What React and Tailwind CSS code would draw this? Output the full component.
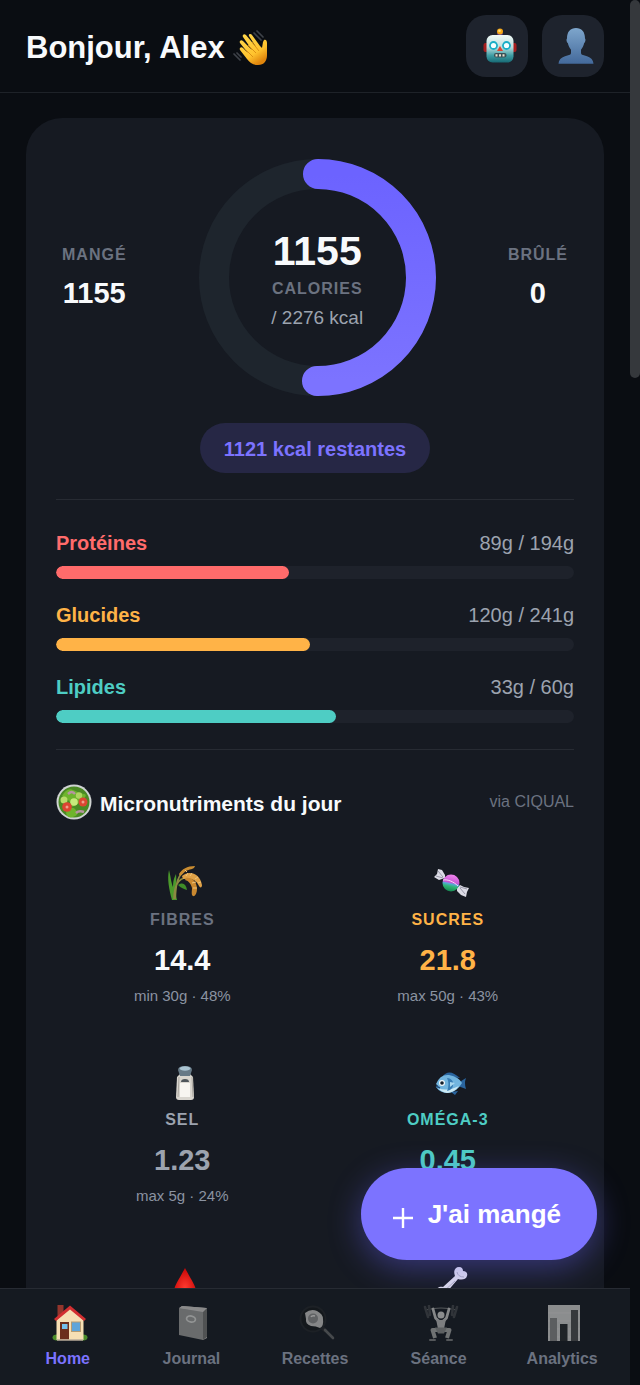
import React from "react";

function Wave() {
  return (
    <svg viewBox="0 0 36 36" className="size-9" aria-hidden="true">
      <defs>
        <linearGradient id="hand" x1="0" y1="0" x2="0.6" y2="1">
          <stop offset="0" stopColor="#ffd84d" />
          <stop offset="0.7" stopColor="#ffc32e" />
          <stop offset="1" stopColor="#e0850c" />
        </linearGradient>
      </defs>
      <path
        d="M31 10c2-1 3 1 3 3v12c0 6-3 10-9 10-5 0-8-2-11-6L7 20c-1-2 1-4 3-2l5 5-8-10c-1-2 1-4 3-2l9 9-9-13c-1-2 1-4 3-2l10 12-7-11c-1-2 2-3 3-1l8 11 2 2 1-6z"
        fill="url(#hand)"
      />
      <path d="M13 20l7 7M15 15l8 8M19 12l7 9" stroke="#d98b12" strokeWidth="0.9" fill="none" />
      <path d="M21 3l7 7M24 1l6 6M1 24l6 6M4 23l4 4" stroke="#3e4249" strokeWidth="1.7" strokeLinecap="round" />
    </svg>
  );
}

function Robot() {
  return (
    <svg viewBox="0 0 36 36" className="size-9" aria-hidden="true">
      <defs>
        <linearGradient id="robot" x1="0" y1="0" x2="0" y2="1">
          <stop offset="0" stopColor="#f1faf7" />
          <stop offset="0.45" stopColor="#b9dcdc" />
          <stop offset="0.75" stopColor="#3d9ca3" />
          <stop offset="1" stopColor="#176a74" />
        </linearGradient>
      </defs>
      <path d="M15 5h6l-1 4h-4z" fill="#5b3a86" />
      <circle cx="18" cy="3.500" r="3" fill="#f5a516" />
      <circle cx="17.500" cy="2.800" r="1.300" fill="#ffe07a" />
      <rect x="1.500" y="15" width="5" height="9" rx="2" fill="#a81d1d" />
      <rect x="29.500" y="15" width="5" height="9" rx="2" fill="#a81d1d" />
      <rect x="4.500" y="7" width="27" height="27.500" rx="6" fill="url(#robot)" />
      <circle cx="11.500" cy="17.500" r="4.400" fill="#19aec7" />
      <circle cx="24.500" cy="17.500" r="4.400" fill="#19aec7" />
      <circle cx="11.500" cy="17.500" r="2.600" fill="#f4ffff" />
      <circle cx="24.500" cy="17.500" r="2.600" fill="#f4ffff" />
      <path d="M18 18l3 5h-6z" fill="#e0432f" />
      <rect x="12" y="25" width="12.500" height="4.500" rx="2" fill="#3a5257" />
      <path d="M13.500 27.300h10" stroke="#e8e0cf" strokeWidth="2.200" strokeDasharray="2 1.500" />
    </svg>
  );
}

function Person() {
  return (
    <svg viewBox="0 0 36 36" className="size-9" aria-hidden="true">
      <defs>
        <linearGradient id="bust" x1="0" y1="0" x2="0" y2="1">
          <stop offset="0" stopColor="#7ea6cc" />
          <stop offset="1" stopColor="#43699b" />
        </linearGradient>
      </defs>
      <path
        d="M18 0c5.500 0 9 3.500 9 10.500 1 .8.300 4-.8 4.500-.7 3-1.700 5-3.200 6.700v3c0 1.200.5 1.800 2 2.300l4 1.200c4 1.300 6.300 3.800 6.500 7.600H.5c.2-3.800 2.500-6.300 6.500-7.600L11 27c1.500-.5 2-1.100 2-2.300v-3C11.500 20 10.500 18 9.800 15 8.700 14.500 8 11.300 9 10.500 9 3.500 12.500 0 18 0z"
        fill="url(#bust)"
      />
    </svg>
  );
}

function Salad() {
  return (
    <svg viewBox="0 0 36 36" className="size-9" aria-hidden="true">
      <circle cx="18" cy="18" r="17.500" fill="#cfd3d2" />
      <circle cx="18" cy="18" r="15.500" fill="#4b8a24" />
      <path d="M6 12q5-9 11-6t11 4-4 8-9 3-9-9zM10 27q6-6 10-1t-3 7-7-6z" fill="#6eb42c" />
      <path d="M12 10q4-4 7 0M20 29q3-3 8-1" stroke="#b794a0" strokeWidth="2.500" fill="none" />
      <circle cx="8" cy="16" r="3.500" fill="#b8dc6a" />
      <circle cx="18" cy="18" r="3.800" fill="#c8ea7c" />
      <circle cx="23" cy="11.500" r="3.200" fill="#aed55f" />
      <circle cx="11" cy="23" r="4.800" fill="#dd4632" />
      <circle cx="27" cy="18" r="4.500" fill="#dd4632" />
      <circle cx="11" cy="23" r="1.500" fill="#f0a08b" />
      <circle cx="27" cy="18" r="1.500" fill="#f0a08b" />
    </svg>
  );
}

function Rice() {
  return (
    <svg viewBox="0 0 36 36" className="size-9" aria-hidden="true">
      <path d="M5 35C2 24 0 14 2 5c2 8 2 12 4 17 0-6 1-9 3-13 1 8-1 18 1 26z" fill="#4b9a2b" />
      <path d="M7 34c0-12 4-21 12-21M8 34c1-10 1-20 7-26" stroke="#8b8a42" strokeWidth="1.600" fill="none" />
      <path d="M11 20c5-3 8-1 9 5-3-1-6-2-9-5z" fill="#3f8c28" />
      <path d="M12 9C15 4 20 1 28 1c-1 4-6 3-9 5s-4 4-6 5z" fill="#c98c31" />
      <path d="M15 11c7-6 18-3 20 9 0 3-2 3-3 1-3-7-9-8-16-7z" fill="#e0a247" />
      <path d="M19 13c6-1 11 4 11 11 0 4-2 8-4 7s-1-5-1-8c-1-4-3-7-7-8z" fill="#c98830" />
      <path d="M19 11l2-3M23 11l2-3M28 14l3-2M31 18l3-1M25 18l4-1M26 23l4 0M18 5l2 2" stroke="#efc47a" strokeWidth="1" />
    </svg>
  );
}

function Candy() {
  return (
    <svg viewBox="0 0 36 36" className="size-9" aria-hidden="true">
      <defs>
        <linearGradient id="candy" x1="0.600" y1="0" x2="0.400" y2="1">
          <stop offset="0" stopColor="#f184ee" />
          <stop offset="0.480" stopColor="#c658d4" />
          <stop offset="0.540" stopColor="#58a9da" />
          <stop offset="0.700" stopColor="#2fb574" />
          <stop offset="1" stopColor="#168651" />
        </linearGradient>
      </defs>
      <path d="M12 13L6 15 1 12l3-3 1-5 4 1 3 5zM24 23l3-3 4 2 5 1-2 4-1 5-5-2-4-4z" fill="#dcdce6" />
      <path d="M5 6l5 6M3 11l7 2M27 23l5 6M27 22l7 2" stroke="#9999aa" strokeWidth="1" />
      <circle cx="18" cy="18" r="8.500" fill="url(#candy)" />
      <path d="M10 15c5-1 11 2 15 6" stroke="#f9d8fb" strokeWidth="1" fill="none" />
    </svg>
  );
}

function Salt() {
  return (
    <svg viewBox="0 0 36 36" className="size-9" aria-hidden="true">
      <path d="M13 9h10l3 3 1 20q0 3-3 3H12q-3 0-3-3l1-20z" fill="#d8d5ce" />
      <path d="M13 18h10v14H13z" fill="#f7f5f0" />
      <path d="M11 5q0-4 7-4t7 4l-2 6H13z" fill="#667986" />
      <ellipse cx="18" cy="3.500" rx="5.500" ry="2.200" fill="#a9c3d1" />
      <path d="M14 17q0-3 4-3t4 3z" fill="#4e555a" />
      <path d="M12 12l-1 20M25 12l1 20" stroke="#aaa69f" strokeWidth="1" />
    </svg>
  );
}

function Fish() {
  return (
    <svg viewBox="0 0 36 36" className="size-9" aria-hidden="true">
      <path d="M10 11q6-8 17 2zM18 27l7-1-3 4zM25 18l8-5q-2 5 0 11l-8-3z" fill="#2a659f" />
      <path d="M3 19q4-10 13-9 10 2 13 8-5 9-14 10Q7 28 3 22l2-1z" fill="#72b5df" />
      <path d="M5 23q9 4 21-2-5 7-12 7-6-1-9-5z" fill="#cbe9f4" />
      <path d="M14 13q3 6 0 13 7-1 6-9-2-4-6-4z" fill="#397eb5" />
      <path d="M17 17l5 1-5 4z" fill="#a9d8ef" />
      <circle cx="9" cy="18" r="3" fill="#f3f8fa" />
      <circle cx="9" cy="18" r="1.800" fill="#111c2a" />
      <path d="M3 21l4 2" stroke="#1f4e7e" strokeWidth="1.500" />
    </svg>
  );
}

function Drop() {
  return (
    <svg viewBox="0 0 36 36" className="size-9" aria-hidden="true">
      <defs>
        <radialGradient id="drop" cx="0.500" cy="0.600" r="0.600">
          <stop offset="0" stopColor="#ff3b30" />
          <stop offset="1" stopColor="#c90606" />
        </radialGradient>
      </defs>
      <path d="M18 3c4 8 11 18 11 23a11 10 0 0 1-22 0c0-5 7-15 11-23z" fill="url(#drop)" />
    </svg>
  );
}

function Bone() {
  return (
    <svg viewBox="0 0 36 36" className="size-9" aria-hidden="true">
      <path
        d="M22 11c-2-5 0-9 4-9 3 0 4 2 4 4 3 0 5 2 4 5-1 4-6 4-9 3L13 28c2 4-1 7-4 6-2-1-2-3-2-4-3 0-4-2-4-4 0-3 4-5 7-4z"
        fill="#dcdae9"
      />
      <path d="M24 7q1 5 7 5M22 16L10 27" stroke="#aaa8bf" strokeWidth="1" fill="none" />
    </svg>
  );
}

function House() {
  return (
    <svg viewBox="0 0 36 36" className="size-9" aria-hidden="true">
      <ellipse cx="5" cy="32.500" rx="4.500" ry="3" fill="#4c8c2a" />
      <ellipse cx="31" cy="32.500" rx="4.500" ry="3" fill="#4c8c2a" />
      <rect x="5.500" y="0" width="6" height="11" fill="#93352c" />
      <path d="M4.500 15L18 3l13.500 12v20h-27z" fill="#f6dfb4" />
      <path d="M18 .5L34 14l-2 2L18 4.500 4 16l-2-2z" fill="#d22f31" />
      <rect x="8" y="17" width="9" height="17.500" fill="#6b2f1c" />
      <rect x="10" y="19" width="5.500" height="5" fill="#74c0ec" />
      <rect x="19.500" y="17" width="9" height="9.500" fill="#5fa5da" stroke="#b59b72" strokeWidth="1" />
      <path d="M5 35h26" stroke="#b9ab98" strokeWidth="1.500" />
    </svg>
  );
}

function Book() {
  return (
    <svg viewBox="0 0 36 36" className="size-9" aria-hidden="true">
      <path d="M4 3l3-2 25 2v30l-4 2z" fill="#8d8d8e" />
      <path d="M4 3l24 4v28L4 30z" fill="#696b6c" />
      <path d="M28 7l4-4v29l-4 3z" fill="#505253" />
      <path d="M7 1l24 2-3 3L5 3z" fill="#8a8a8a" />
      <ellipse cx="16" cy="14" rx="4.500" ry="3" transform="rotate(12 16 14)" fill="none" stroke="#929494" strokeWidth="1.700" />
    </svg>
  );
}

function Pan() {
  return (
    <svg viewBox="0 0 36 36" className="size-9" aria-hidden="true">
      <path d="M22 22l5 4" stroke="#202327" strokeWidth="4" />
      <path d="M26 25l8 8" stroke="#46494c" strokeWidth="2.600" strokeLinecap="round" />
      <circle cx="14" cy="14" r="13.500" fill="#1d2126" />
      <circle cx="14" cy="14" r="11.500" fill="#14181c" />
      <path d="M6 8q6-5 12-2t6 8q1 7-3 9-4-2-9-2-6-2-5-7z" fill="#858687" />
      <circle cx="14" cy="13.500" r="5" fill="#606264" />
      <path d="M12 12q1-2 4-1" stroke="#999a9a" strokeWidth="1.500" fill="none" />
    </svg>
  );
}

function Lifter() {
  return (
    <svg viewBox="0 0 36 36" className="size-9" aria-hidden="true">
      <path d="M3 5Q18 1 33 5" stroke="#55595b" strokeWidth="1" fill="none" />
      <path d="M2 2l3 10M6 1l1 9M34 2l-3 10M30 1l-1 9" stroke="#303439" strokeWidth="2.600" strokeLinecap="round" />
      <path d="M10 4l2.500 9 4 4M26 4l-2.500 9-4 4" stroke="#858788" strokeWidth="2.800" strokeLinecap="round" strokeLinejoin="round" fill="none" />
      <circle cx="18" cy="10" r="3.500" fill="#8b8d8e" />
      <path d="M13 14q5 2 10 0l-2 10h-6z" fill="#7c7e80" />
      <path d="M15 25H9.500l2.500 8M21 25h5.500L24 33" stroke="#6f7273" strokeWidth="4" strokeLinejoin="round" fill="none" />
      <path d="M12 22.500h12l-3 6h-6z" fill="#5d6062" />
      <path d="M7 35h5M24 35h5" stroke="#54575a" strokeWidth="2" strokeLinecap="round" />
    </svg>
  );
}

function Chart() {
  return (
    <svg viewBox="0 0 36 36" className="size-9" aria-hidden="true">
      <rect x="2" width="32" height="36" fill="#8b8d8e" />
      <path d="M2 8h32M2 16h32M2 24h32M2 32h32" stroke="#949697" strokeWidth="0.800" />
      <rect x="4" y="13" width="7" height="23" fill="#5c5e60" />
      <rect x="14" y="19" width="7.500" height="17" fill="#1f2327" />
      <rect x="25" y="5" width="7" height="31" fill="#36393c" />
    </svg>
  );
}

const macros = [
  { name: "Protéines", value: "89g / 194g", pct: 45, text: "text-[#ff6b6b]", bar: "bg-[#ff6b6b]" },
  { name: "Glucides", value: "120g / 241g", pct: 49, text: "text-[#ffb347]", bar: "bg-[#ffb347]" },
  { name: "Lipides", value: "33g / 60g", pct: 54, text: "text-[#4ecdc4]", bar: "bg-[#4ecdc4]" },
];

const micros = [
  { icon: Rice, name: "FIBRES", value: "14.4", note: "min 30g · 48%", label: "text-[#6b7280]", number: "text-[#f8fafc]" },
  { icon: Candy, name: "SUCRES", value: "21.8", note: "max 50g · 43%", label: "text-[#ffb347]", number: "text-[#ffb347]" },
  { icon: Salt, name: "SEL", value: "1.23", note: "max 5g · 24%", label: "text-[#9ca3af]", number: "text-[#9ca3af]" },
  { icon: Fish, name: "OMÉGA-3", value: "0.45", label: "text-[#4ecdc4]", number: "text-[#4ecdc4]" },
  { icon: Drop },
  { icon: Bone },
];

const tabs = [
  { icon: House, name: "Home", color: "text-[#7c73ff]" },
  { icon: Book, name: "Journal", color: "text-[#6b7280]" },
  { icon: Pan, name: "Recettes", color: "text-[#6b7280]" },
  { icon: Lifter, name: "Séance", color: "text-[#6b7280]" },
  { icon: Chart, name: "Analytics", color: "text-[#6b7280]" },
];

function Stat({ label, value }) {
  return (
    <div className="flex flex-col items-center gap-2 pt-1">
      <span className="text-base leading-5 font-bold tracking-[1px] text-[#6b7280]">{label}</span>
      <span className="text-[29px] leading-10 font-bold">{value}</span>
    </div>
  );
}

function CalorieRing() {
  return (
    <div className="grid place-items-center">
      <svg viewBox="0 0 238 238" className="col-start-1 row-start-1 size-[238px]" aria-hidden="true">
        <defs>
          <linearGradient id="ring" x1="0" y1="0" x2="0" y2="1">
            <stop offset="0" stopColor="#6c63ff" />
            <stop offset="1" stopColor="#7c73ff" />
          </linearGradient>
        </defs>
        <circle cx="119.500" cy="119.500" r="103.500" fill="none" stroke="#1e252d" strokeWidth="30" />
        <path
          d="M120 16A103.500 103.500 0 1 1 119 223"
          fill="none"
          stroke="url(#ring)"
          strokeWidth="30"
          strokeLinecap="round"
        />
      </svg>
      <div className="col-start-1 row-start-1 flex flex-col items-center pt-1.5">
        <span className="text-[41px] leading-12 font-bold">1155</span>
        <span className="text-base leading-7 font-bold tracking-[1px] text-[#6b7280]">CALORIES</span>
        <span className="text-[19px] leading-[30px] text-[#9ca3af]">/ 2276 kcal</span>
      </div>
    </div>
  );
}

export default function App() {
  return (
    <div className="flex h-screen bg-[#0a0d12] font-['Liberation_Sans',Arial,sans-serif] text-[#f8fafc]">
      <div className="relative flex min-w-0 flex-1 flex-col">
        <header className="flex items-center justify-between border-b border-[#1e2228] px-[26px] py-[15px]">
          <h1 className="flex items-center gap-2 pt-1 text-[31px] leading-10 font-bold">
            Bonjour, Alex <Wave />
          </h1>
          <div className="flex gap-3.5">
            <button type="button" aria-label="Assistant" className="grid size-[62px] place-items-center rounded-[20px] bg-[#1e232d] pl-1.5">
              <Robot />
            </button>
            <button type="button" aria-label="Profil" className="grid size-[62px] place-items-center rounded-[20px] bg-[#1e232d] pl-1.5">
              <Person />
            </button>
          </div>
        </header>

        <main className="min-h-0 flex-1 overflow-hidden px-[26px] pt-[25px]">
          <section className="rounded-[36px] bg-[#161a22] px-[30px] pt-10">
            <div className="flex items-center justify-between px-1.5">
              <Stat label="MANGÉ" value="1155" />
              <CalorieRing />
              <Stat label="BRÛLÉ" value="0" />
            </div>

            <div className="mt-[27px] flex justify-center">
              <p className="rounded-full bg-[#262745] px-6 pt-[13px] pb-[11px] text-xl leading-[26px] font-bold text-[#7c73ff]">
                1121 kcal restantes
              </p>
            </div>

            <div className="mt-[26px] flex flex-col gap-6 border-y border-[#272b33] pt-[31px] pb-[26px]">
              {macros.map((m) => (
                <div key={m.name}>
                  <div className="flex justify-between text-xl leading-6">
                    <span className={"font-bold " + m.text}>{m.name}</span>
                    <span className="text-[#9ca3af]">{m.value}</span>
                  </div>
                  <div className="mt-[11px] h-[13px] overflow-hidden rounded-full bg-[#1e222b]">
                    <div className={"h-full rounded-full " + m.bar} style={{ width: m.pct + "%" }} />
                  </div>
                </div>
              ))}
            </div>

            <div className="mt-8 flex items-center justify-between">
              <h2 className="flex items-center gap-2 text-[21px] leading-9 font-bold">
                <Salad />
                <span className="pt-1">Micronutriments du jour</span>
              </h2>
              <span className="text-base text-[#6b7280]">via CIQUAL</span>
            </div>

            <div className="mt-5 grid grid-cols-2 gap-[13px]">
              {micros.map((m, i) => {
                const Icon = m.icon;
                return (
                  <div key={i} className="flex min-h-[186px] flex-col items-center py-[23px]">
                    <div className="pl-1.5">
                      <Icon />
                    </div>
                    {m.name && (
                      <>
                        <span className={"mt-[7px] text-base leading-6 font-bold tracking-[1px] " + m.label}>{m.name}</span>
                        <span className={"mt-2.5 text-[29px] leading-9 font-bold " + m.number}>{m.value}</span>
                      </>
                    )}
                    {m.note && <span className="mt-2 text-[15px] leading-5 text-[#8b93a1]">{m.note}</span>}
                  </div>
                );
              })}
            </div>
          </section>
        </main>

        <button
          type="button"
          className="absolute right-[33px] bottom-[125px] flex items-center gap-3.5 rounded-full bg-[#7c73ff] py-[26px] pr-9 pl-[31px] text-[26px] leading-10 font-bold text-white shadow-[0_8px_32px_rgba(108,99,255,0.4)]"
        >
          <svg viewBox="0 0 22 30" className="h-[30px] w-[22px]" aria-hidden="true">
            <path d="M1 19h20M11 9v20" stroke="#fff" strokeWidth="2.400" />
          </svg>
          J'ai mangé
        </button>

        <nav className="relative grid grid-cols-5 border-t border-[#272b33] bg-[#151a21] px-1.5 pt-4 pb-[15px]">
          {tabs.map((t) => {
            const Icon = t.icon;
            return (
              <a key={t.name} href={"#" + t.name.toLowerCase()} className={"flex flex-col items-center gap-[7px] text-base leading-[22px] font-bold " + t.color}>
                <div className="pl-1">
                  <Icon />
                </div>
                {t.name}
              </a>
            );
          })}
        </nav>
      </div>
      <div className="w-2.5 shrink-0 bg-[#0a0d12]" aria-hidden="true">
        <div className="h-[378px] rounded-full bg-[#35383c]" />
      </div>
    </div>
  );
}
